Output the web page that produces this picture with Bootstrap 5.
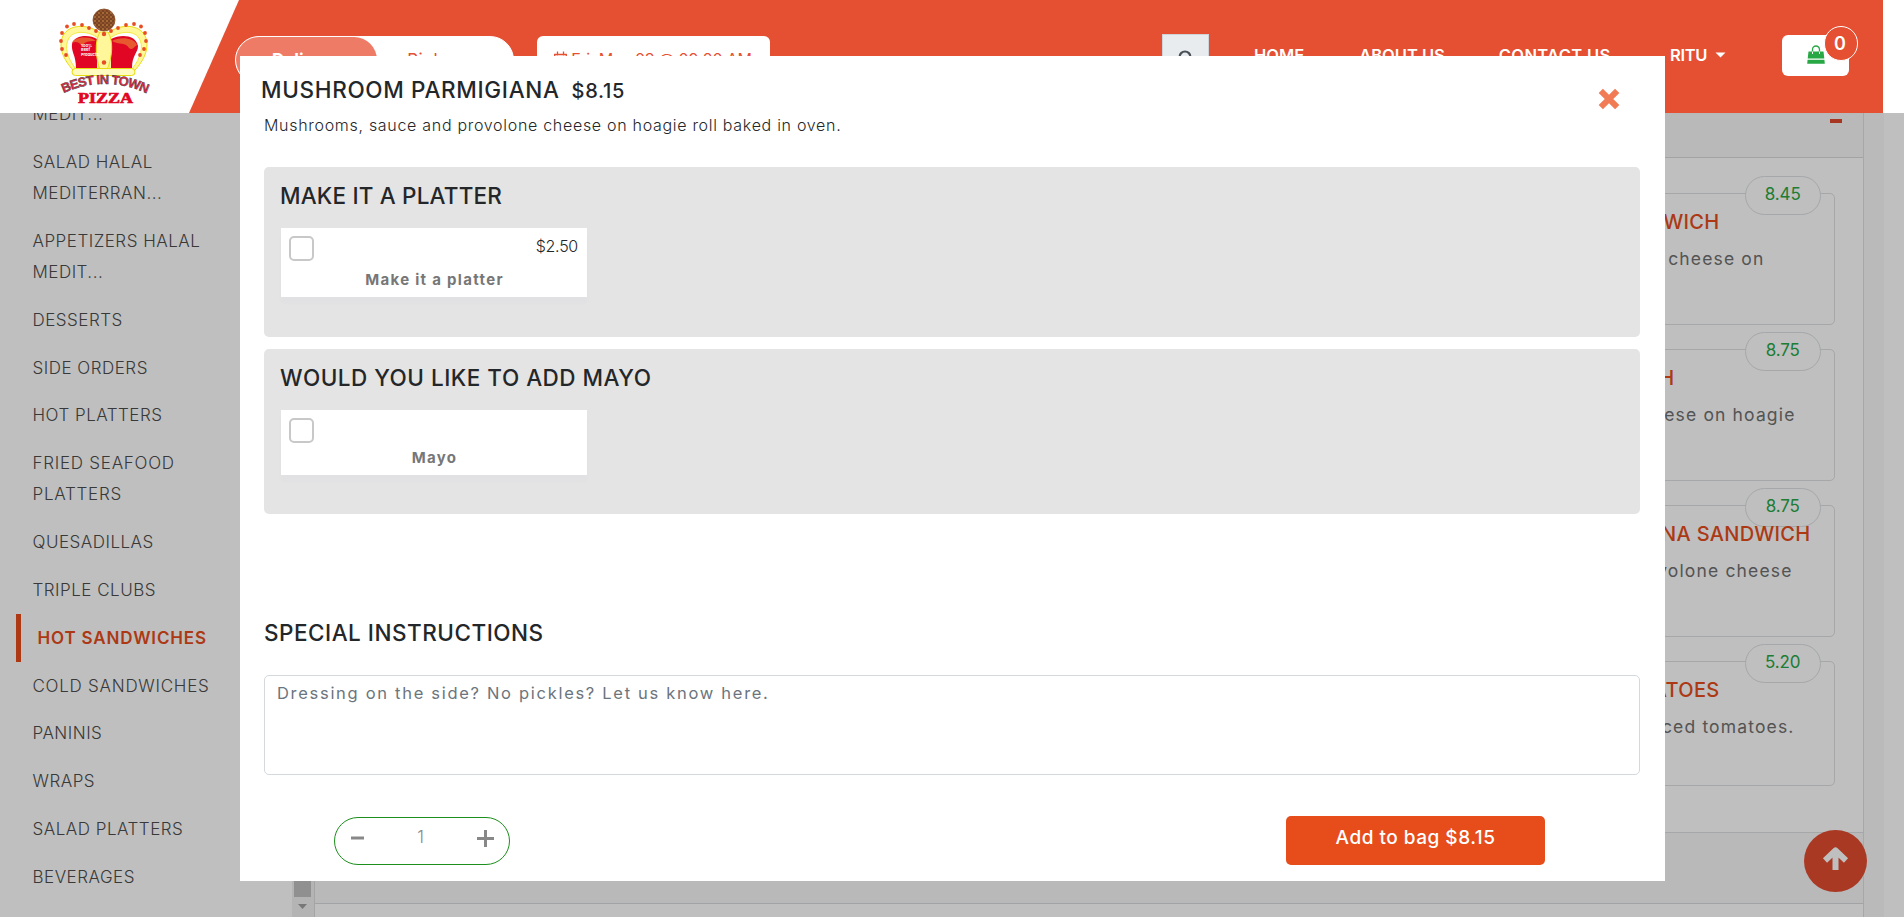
<!DOCTYPE html>
<html lang="en">
<head>
<meta charset="utf-8">
<meta name="viewport" content="width=device-width, initial-scale=1">
<title>Best in Town Pizza</title>
<link href="https://cdn.jsdelivr.net/npm/bootstrap@5.3.0/dist/css/bootstrap.min.css" rel="stylesheet">
<style>
  body { font-family: Inter, "Open Sans", sans-serif; height: 917px; overflow: hidden; background: #fff; color: #24272a; }

  /* header */
  .site-header { height: 113px; z-index: 1060; background: #fff; }
  .header-band { width: 1883px; background: #e55032; clip-path: polygon(239px 0, 100% 0, 100% 100%, 189px 100%); }
  .brand-logo { left: 50px; top: 0; z-index: 2; }
  .mode-toggle { width: 279px; height: 48px; margin-left: 235px; margin-top: 36px; border: 1px solid #fff; background: #fff; }
  .mode-toggle .on { width: 141px; background: #ee7b66; color: #fff; font-weight: 700; }
  .mode-toggle .off { width: 118px; color: #e55032; letter-spacing: .5px; }
  .mode-toggle div { font-size: 17px; line-height: 46px; }
  .date-box { width: 233px; height: 48px; margin-left: 23px; margin-top: 36px; background: #fff; color: #e55032; font-size: 16px; letter-spacing: -.15px; line-height: 47px; padding-left: 17px; white-space: nowrap; }
  .date-box svg { margin-top: -5px; }
  .search-btn { width: 47px; height: 44px; margin-left: 392px; margin-top: 34px; background: #e9ecef; border: 1px solid #ced4da; padding: 14px 0 0 14px; }
  .top-link { font-size: 16.5px; font-weight: 600; line-height: 20px; margin-top: 45px; color: #fff; white-space: nowrap; }
  .cart-btn { width: 67px; height: 41px; left: 1782px; top: 35px; }
  .cart-count { width: 34px; height: 35px; left: 1824px; top: 26px; border: 1px solid #fff; background: #e55032; color: #fff; font-size: 18px; font-weight: 600; padding: 0 2px 1px 0; }

  /* menu page */
  .menu-page { height: 804px; margin-top: 113px; }
  .cat-list { width: 292px; overflow: hidden; }
  .cat-list ul { margin-top: -53.5px; }
  .cat-list li { padding: 8.3px 40px 8.3px 32.5px; font-size: 17px; font-weight: 300; line-height: 31.2px; letter-spacing: .5px; color: #4d4d4d; text-transform: uppercase; white-space: nowrap; }
  .cat-list li.current { margin-left: 16px; padding-left: 16.5px; border-left: 5px solid #e64d1b; color: #e64d1b; font-weight: 600; letter-spacing: .85px; }
  .cat-list li.wide { letter-spacing: .74px; }
  .cat-scroll { width: 21.5px; background: #f1f1f1; padding-bottom: 8px; }
  .cat-scroll .thumb { width: 17px; height: 784px; background: #c1c1c1; margin-bottom: 7px; }
  .item-panel { width: 1550px; border-left: 1px solid #dcdcdc; border-right: 1px solid #dcdfe2; }
  .panel-head { background: #f7f7f7; border-bottom: 1px solid #d8dadd; }
  .panel-head.first { height: 45px; padding: 6px 20.5px 0 0; }
  .panel-head.next { height: 72px; border-top: 1px solid #dcdfe2; }
  .minus-mark { width: 12.5px; height: 3.5px; background: #e04a2c; }
  .item-list { height: 673.5px; padding: 35px 28px 0 784px; }
  .dish { height: 132px; margin-bottom: 24px; border: 1px solid #dcdfe2; border-radius: 5px; padding-top: 16px; }
  .dish:last-child { height: 125px; }
  .dish-title { font-size: 20px; font-weight: 500; letter-spacing: .3px; line-height: 25px; color: #e64d1b; }
  .dish-text { font-size: 17.5px; font-weight: 400; letter-spacing: 1.15px; line-height: 26px; margin-top: 10.5px; color: #707070; }
  .dish-price { right: 13px; top: -18px; width: 75.5px; height: 39px; border: 1px solid #dcdfe2; background: #fff; color: #28a745; font-size: 17px; font-weight: 400; letter-spacing: -.1px; line-height: 35.5px; }
  .side-gap { width: 20px; background: #f9f9f9; }
  .to-top { width: 63px; height: 62px; left: 1804px; top: 830px; background: #e34c30; z-index: 5; }
  .shade { background: #000; opacity: .25; z-index: 1040; }

  /* dish dialog */
  .dish-dialog { left: 240px; top: 56px; width: 1425px; height: 825px; z-index: 1080; background: #fff; padding: 20px 25px 0 24px; }
  .big-title { font-size: 22.5px; font-weight: 500; line-height: 30px; margin: 0; letter-spacing: .5px; }
  .dish-intro { font-size: 16px; font-weight: 300; letter-spacing: .7px; line-height: 24px; margin-top: 7px; }
  .choice-group { background: #e4e4e4; border-radius: 5px; padding: 14px 16px 0 16px; }
  .choice-box { width: 306px; background: #fff; margin: 17px 0 0 1px; padding: 8px 9px 0 8px; box-shadow: 0 6px 2px #e1e1e3; }
  .tick { width: 25px; height: 25px; border: 2px solid #c8c8c8; border-radius: 5px; }
  .choice-price { font-size: 16px; font-weight: 300; letter-spacing: -.25px; line-height: 20px; }
  .choice-name { font-size: 15px; font-weight: 700; letter-spacing: 1.3px; line-height: 20px; padding-left: 2px; color: #777; }
  .note-field.form-control { height: 100px; margin-top: 27px; padding: 4.5px 12px; resize: none; border: 1px solid #d4d9de; border-radius: 5px; font-size: 16.5px; letter-spacing: 1.7px; }
  .note-field::placeholder { color: #6c757d; }
  .qty-pill { width: 176px; height: 48px; margin-left: 70px; margin-top: 1px; border: 1px solid #1c8f1c; padding: 0 15px 5px 16px; color: #888; }
  .add-btn.btn { width: 259px; height: 49px; margin-right: 95px; background: #e64d1b; color: #fff; font-size: 19px; font-weight: 500; letter-spacing: .5px; padding: 0 0 3px; border: 0; border-radius: 5px; }
</style>
</head>
<body class="position-relative">

<header class="site-header position-absolute top-0 start-0 w-100">
  <svg class="brand-logo position-absolute" width="110" height="112" viewBox="0 0 110 112">
    <defs>
      <pattern id="crust" width="4" height="4" patternUnits="userSpaceOnUse">
        <rect width="4" height="4" fill="#7a4322"/><circle cx="1" cy="1" r=".9" fill="#b87a42"/><circle cx="3" cy="3" r=".8" fill="#a9683a"/>
      </pattern>
    </defs>
    <path d="M24 71C13 60 7 45 14 34c8-11 26-9 36-1h8c10-8 28-10 36 1 7 11 1 26-10 37z" fill="#fff79a" stroke="#e8dc10" stroke-width="1"/>
    <path d="M26 69C17 58 14 46 19 38c5-8 20-7 29 0v31zM82 69c9-11 12-23 7-31-5-8-20-7-29 0v31z" fill="#fff" stroke="#f0e31a" stroke-width=".8"/>
    <path d="M26 68c0-13-5-16-4-24 2-9 17-10 25-5v29z" fill="#e00624"/>
    <path d="M82 68c0-13 6-15 6-22-2-11-17-12-27-7v29z" fill="#e00624"/>
    <path d="M22 43c1-6 18-8 24-2-8 0-12 1-14 5-3-4-6-5-10-3zM62 41c8-5 23-3 25 4-3 2-5 6-8 3-3-6-10-3-17-7z" fill="#e8582e"/>
    <path d="M50 32c-6 10-4 26 0 38h7c5-12 7-28 1-38z" fill="#fff79a" stroke="#eadd1c" stroke-width="1"/>
    <rect x="22" y="68.500" width="63" height="7" rx="3.500" fill="#fffbc0" stroke="#e8dc10" stroke-width="1"/>
    <g fill="#e84c22">
      <circle cx="11" cy="41" r="1.900"/><circle cx="12" cy="33" r="1.900"/><circle cx="17" cy="26.500" r="1.900"/><circle cx="24" cy="24" r="1.900"/><circle cx="32" cy="25" r="1.900"/><circle cx="39" cy="28" r="1.900"/><circle cx="46" cy="31" r="1.900"/><circle cx="54" cy="34" r="2.200"/><circle cx="61" cy="31" r="1.900"/><circle cx="68" cy="28" r="1.900"/><circle cx="76" cy="25" r="1.900"/><circle cx="84" cy="24" r="1.900"/><circle cx="91" cy="26.500" r="1.900"/><circle cx="95" cy="33" r="1.900"/><circle cx="96" cy="41" r="1.900"/><circle cx="94" cy="49" r="1.900"/><circle cx="90" cy="55" r="1.900"/><circle cx="12" cy="49" r="1.900"/><circle cx="16" cy="55" r="1.900"/><circle cx="54" cy="62.500" r="2.200"/>
    </g>
    <circle cx="54" cy="20" r="11" fill="url(#crust)" stroke="#8a4f28" stroke-width=".8"/>
    <g fill="#fff" font-family="Inter" font-weight="700" font-size="4"><text x="31" y="46.500">100%</text><text x="31" y="51.200">Beef</text><text x="31" y="55.900">Products</text></g>
    <path id="arc" d="M13.500 93Q54 75 96 93" fill="none"/>
    <text font-family="Liberation Sans" font-weight="700" font-size="13" letter-spacing="-.75" fill="#ef2440" stroke="#444" stroke-width=".5"><textPath href="#arc">BEST IN TOWN</textPath></text>
    <text x="28" y="102.500" font-family="Liberation Serif" font-weight="700" font-size="15.500" fill="#e00624" stroke="#e00624" stroke-width=".7" textLength="55" lengthAdjust="spacingAndGlyphs">PIZZA</text>
  </svg>

  <div class="header-band h-100 d-flex align-items-start">
    <div class="mode-toggle rounded-pill d-flex flex-shrink-0">
      <div class="on rounded-pill text-center">Delivery</div>
      <div class="off text-center">Pickup</div>
    </div>
    <div class="date-box rounded flex-shrink-0">
      <svg width="13" height="15" viewBox="0 0 13 15" fill="none" stroke="#e55032" stroke-width="1.300"><path d="M.7 3.500h11.600v10.500H.7zM.7 6.500h11.600M3.500.5v4M9.500.5v4M4.500 6.500V14M8.500 6.500V14M.7 10.200h11.600"/></svg>
      Fri, May 03 @ 09:20 AM
    </div>
    <div class="search-btn flex-shrink-0">
      <svg class="d-block" width="18" height="18" viewBox="0 0 18 18" fill="none" stroke="#495057" stroke-width="2.200"><circle cx="8" cy="8" r="5.500"/><path d="M12 12l5 5"/></svg>
    </div>
    <a class="top-link text-decoration-none" style="margin-left:45px">HOME</a>
    <a class="top-link text-decoration-none" style="margin-left:55px">ABOUT US</a>
    <a class="top-link text-decoration-none" style="margin-left:54px;letter-spacing:.35px">CONTACT US</a>
    <a class="top-link text-decoration-none position-absolute" style="left:1670px;letter-spacing:-.3px">RITU<svg class="ms-2" width="11" height="6" viewBox="0 0 11 6" style="margin-top:-4px"><path d="M.5.5h10L5.500 5.500z" fill="#fff"/></svg></a>
    <div class="cart-btn position-absolute bg-white rounded">
      <svg class="d-block" width="18" height="19" viewBox="0 0 18 19" style="margin:10px 0 0 25px"><path d="M1.500 6.500h15l.8 7H.7zM.6 14.700h16.800l.4 4H.2z" fill="#28a745"/><path d="M5.500 9V4.500a3.500 3.500 0 017 0V9" fill="none" stroke="#28a745" stroke-width="1.300"/><path d="M5.500 6.500V9M12.500 6.500V9" stroke="#fff" stroke-width="1"/></svg>
    </div>
    <span class="cart-count position-absolute rounded-pill d-flex align-items-center justify-content-center">0</span>
  </div>
</header>

<main class="menu-page d-flex position-absolute top-0 start-0 w-100">
  <nav class="cat-list flex-shrink-0">
    <ul class="list-unstyled mb-0">
      <li>Seafood Halal<br>Medit...</li>
      <li>Salad Halal<br>Mediterran...</li>
      <li>Appetizers Halal<br>Medit...</li>
      <li>Desserts</li>
      <li>Side Orders</li>
      <li>Hot Platters</li>
      <li class="wide">Fried Seafood<br>Platters</li>
      <li>Quesadillas</li>
      <li>Triple Clubs</li>
      <li class="current">Hot Sandwiches</li>
      <li class="wide">Cold Sandwiches</li>
      <li>Paninis</li>
      <li>Wraps</li>
      <li>Salad Platters</li>
      <li>Beverages</li>
    </ul>
  </nav>
  <div class="cat-scroll flex-shrink-0 d-flex flex-column align-items-center">
    <div class="thumb"></div>
    <svg width="9" height="5" viewBox="0 0 9 5"><path d="M0 0h9L4.500 5z" fill="#a0a0a0"/></svg>
  </div>
  <section class="item-panel flex-shrink-0">
    <div class="panel-head first d-flex justify-content-end"><span class="minus-mark"></span></div>
    <div class="item-list">
      <article class="dish position-relative text-end">
        <span class="dish-price position-absolute rounded-pill text-center">8.45</span>
        <div class="dish-title" style="padding-right:114px">SANDWICH</div>
        <div class="dish-text" style="padding-right:69px">cheese on</div>
      </article>
      <article class="dish position-relative text-end">
        <span class="dish-price position-absolute rounded-pill text-center">8.75</span>
        <div class="dish-title" style="padding-right:159px">SANDWICH</div>
        <div class="dish-text" style="padding-right:38px">cheese on hoagie</div>
      </article>
      <article class="dish position-relative text-end">
        <span class="dish-price position-absolute rounded-pill text-center">8.75</span>
        <div class="dish-title position-relative" style="padding-right:23px">PARMIGIANA SANDWICH</div>
        <div class="dish-text" style="padding-right:41px">provolone cheese</div>
      </article>
      <article class="dish position-relative text-end">
        <span class="dish-price position-absolute rounded-pill text-center">5.20</span>
        <div class="dish-title" style="padding-right:114px">TOMATOES</div>
        <div class="dish-text" style="padding-right:39px">sliced tomatoes.</div>
      </article>
    </div>
    <div class="panel-head next"></div>
  </section>
  <div class="side-gap flex-shrink-0"></div>
</main>

<a class="to-top position-absolute rounded-circle d-flex justify-content-center">
  <svg width="27" height="25" viewBox="0 0 27 25" style="margin-top:15.500px" fill="none" stroke="#fff" stroke-width="6" stroke-linejoin="round"><path d="M13.500 24V5M3 14.500L13.500 4.500 24 14.500"/></svg>
</a>
<div class="shade position-absolute top-0 start-0 w-100 h-100"></div>

<div class="dish-dialog position-absolute" role="dialog">
  <div class="d-flex justify-content-between" style="height:91px">
    <div>
      <h5 class="big-title d-flex align-items-baseline" style="margin-left:-3px;margin-top:-1px;letter-spacing:.67px">MUSHROOM PARMIGIANA<span style="font-size:20px;margin-left:12px">$8.15</span></h5>
      <p class="dish-intro">Mushrooms, sauce and provolone cheese on hoagie roll baked in oven.</p>
    </div>
    <svg width="22" height="22" viewBox="0 0 22 22" style="margin:12px 20px 0 0" fill="none" stroke="#f07b55" stroke-width="6" stroke-linejoin="round"><path d="M2.800 2.800l16.400 16.400M19.200 2.800L2.800 19.200"/></svg>
  </div>

  <section class="choice-group" style="height:170px">
    <h5 class="big-title" style="letter-spacing:.18px">MAKE IT A PLATTER</h5>
    <div class="choice-box" style="height:69px">
      <div class="d-flex justify-content-between" style="height:34px"><span class="tick"></span><span class="choice-price">$2.50</span></div>
      <div class="choice-name text-center">Make it a platter</div>
    </div>
  </section>
  <section class="choice-group" style="height:165px;margin-top:12px">
    <h5 class="big-title">WOULD YOU LIKE TO ADD MAYO</h5>
    <div class="choice-box" style="height:65px">
      <div style="height:30px"><span class="tick d-block"></span></div>
      <div class="choice-name text-center">Mayo</div>
    </div>
  </section>

  <h5 class="big-title" style="margin-top:104px">SPECIAL INSTRUCTIONS</h5>
  <textarea class="note-field form-control" placeholder="Dressing on the side? No pickles? Let us know here."></textarea>

  <div class="d-flex justify-content-between" style="margin-top:40.5px">
    <div class="qty-pill rounded-pill d-flex align-items-center justify-content-between">
      <svg width="13" height="17" viewBox="0 0 13 17"><path d="M0 8h13" stroke="#888" stroke-width="3"/></svg>
      <span class="fw-light" style="font-size:17px">1</span>
      <svg width="17" height="17" viewBox="0 0 17 17"><path d="M0 8.500h17M8.500 0v17" stroke="#888" stroke-width="3"/></svg>
    </div>
    <button class="add-btn btn">Add to bag $8.15</button>
  </div>
</div>

<script src="https://cdn.jsdelivr.net/npm/bootstrap@5.3.0/dist/js/bootstrap.bundle.min.js"></script>
</body>
</html>
